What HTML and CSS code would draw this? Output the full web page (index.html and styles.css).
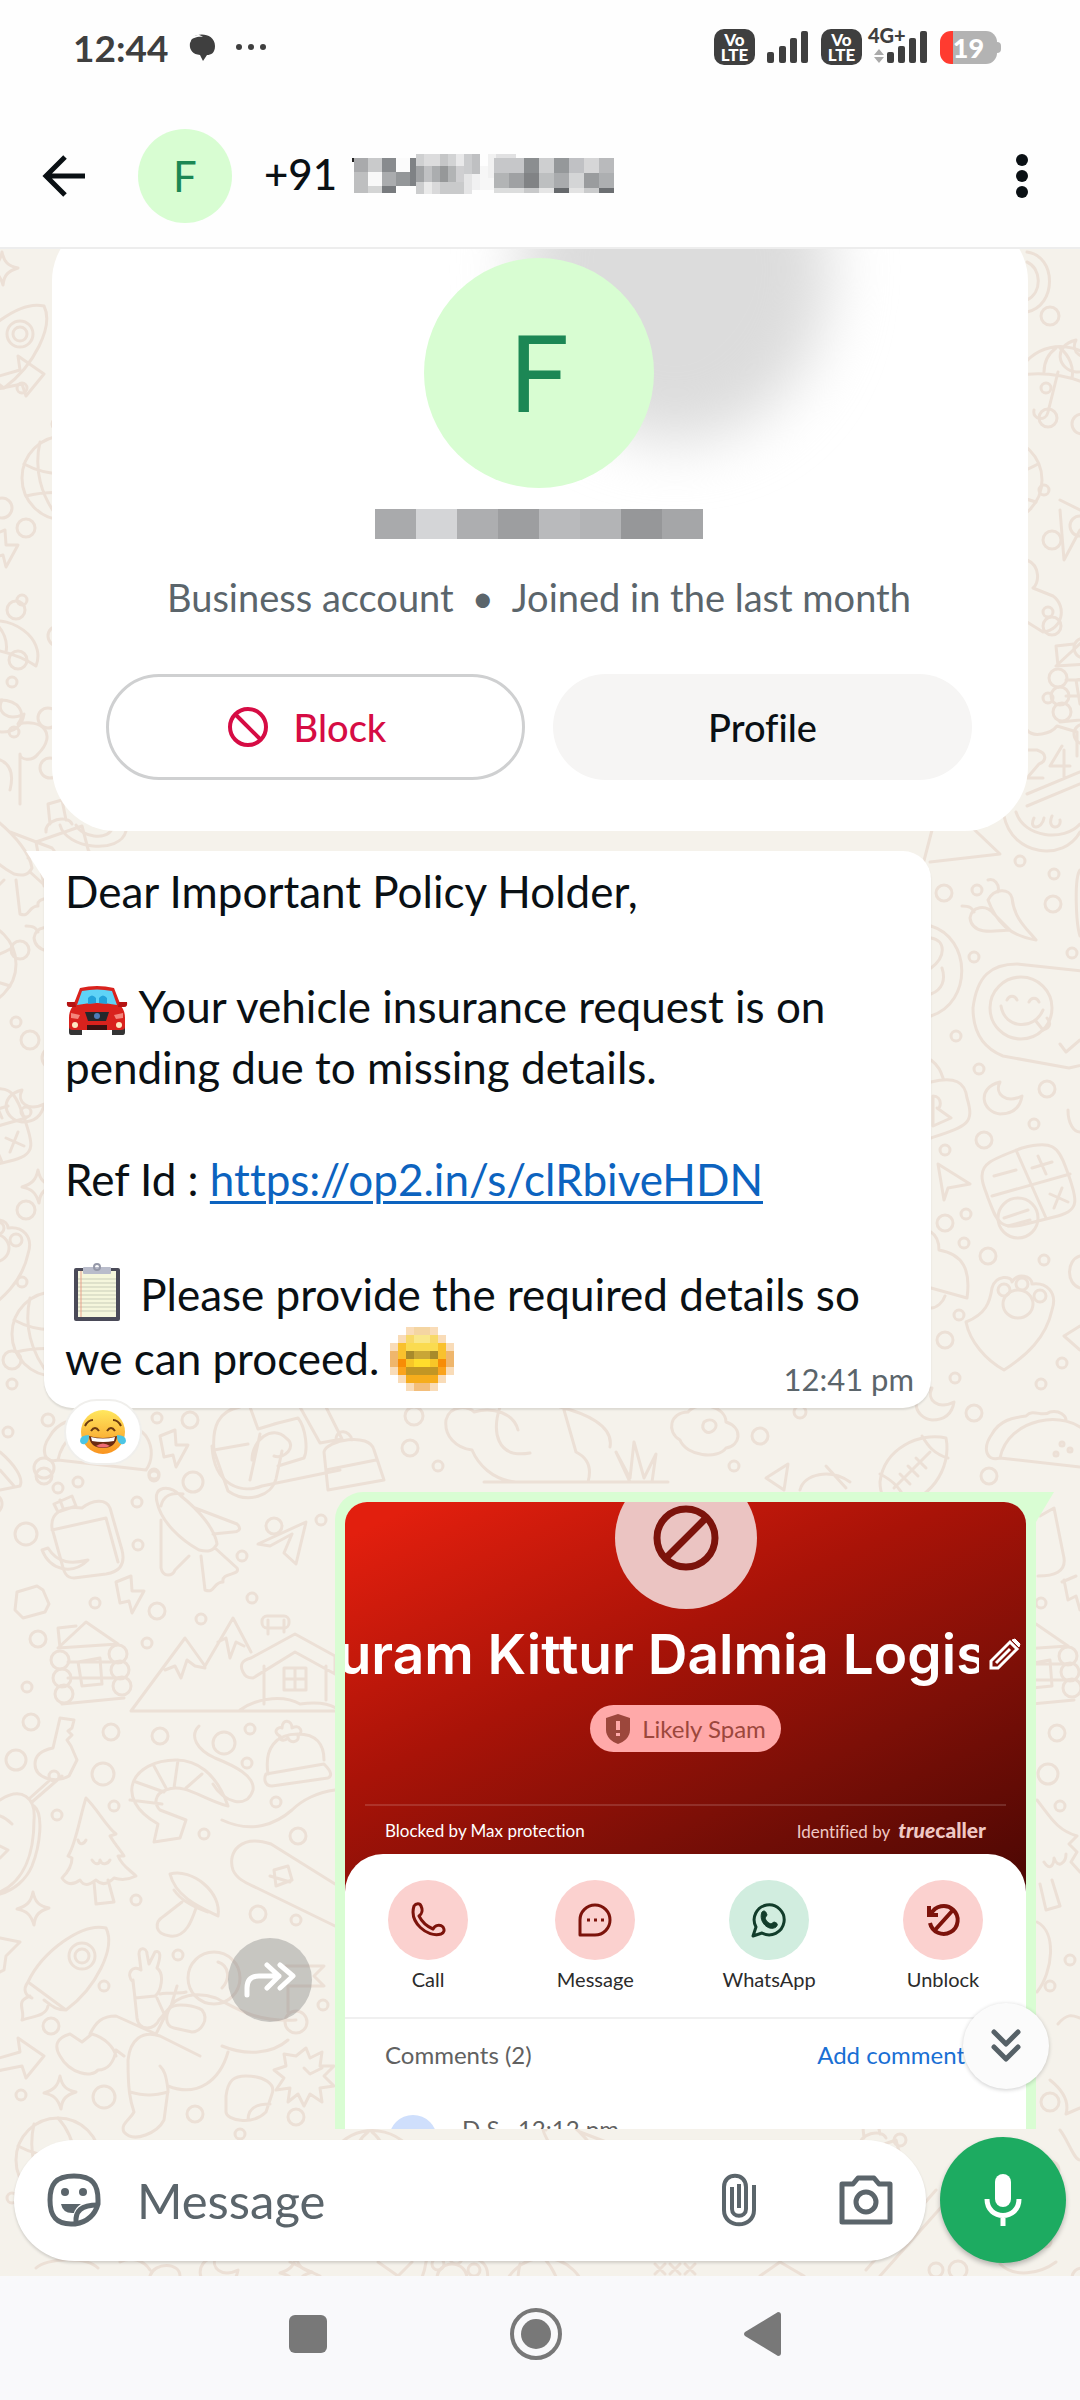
FILE: index.html
```html
<!DOCTYPE html>
<html lang="en">
<head>
    <meta charset="utf-8">
    <meta name="viewport" content="width=device-width, initial-scale=1">
    <title>Chat</title>
    <link rel="stylesheet" href="styles.css">
</head>
<body>
    <div class="status-bar">
        <div class="status-left">
            <span class="clock">12:44</span>
            <svg width="28" height="28" viewBox="0 0 28 28"><path d="M5 4C12-1 27 1 27 13c0 7-4 9-8 9l-4 6-3-6C4 21 1 16 2 10l1-2c0-3 8-5 12-4C10 0 7 3 5 4z" fill="#3f3f3f"/></svg>
            <svg width="30" height="8" viewBox="0 0 30 8" fill="#3f3f3f"><circle cx="3" cy="4" r="3"/><circle cx="15" cy="4" r="3"/><circle cx="27" cy="4" r="3"/></svg>
        </div>
        <div class="status-right">
            <span class="volte">Vo<br>LTE</span>
            <svg width="42" height="34" viewBox="0 0 42 34" fill="#3f3f3f"><rect x="0" y="22" width="7" height="11" rx="2"/><rect x="12" y="16" width="7" height="17" rx="2"/><rect x="23" y="8" width="7" height="25" rx="2"/><rect x="34" y="1" width="7" height="32" rx="2"/></svg>
            <span class="volte">Vo<br>LTE</span>
            <span class="network">
                <span class="network-type">4G+</span>
                <svg width="54" height="34" viewBox="0 0 54 34" fill="#3f3f3f"><path d="M0 25l5-6 5 6zM0 27h10l-5 6z" fill="#aaa"/><rect x="13" y="22" width="7" height="11" rx="2"/><rect x="24" y="16" width="7" height="17" rx="2"/><rect x="35" y="8" width="7" height="25" rx="2"/><rect x="46" y="1" width="7" height="32" rx="2"/></svg>
            </span>
            <span class="battery">19</span>
        </div>
    </div>

    <header class="chat-header">
        <button class="icon-button" aria-label="Back">
            <svg width="44" height="44" viewBox="0 0 44 44" fill="none" stroke="#0a1014" stroke-width="5"><path d="M43 22H5M23 3L4 22l19 19"/></svg>
        </button>
        <div class="avatar">F</div>
        <div class="contact">
            <span>+91</span>
            <svg width="266" height="44" viewBox="300 60 798 132" shape-rendering="crispEdges">
                <path d="M302 78h8v12h-8z" fill="#222"/>
                <path d="M309 78h42v42h-42z" fill="#a9aaac"/><path d="M351 78h42v42h-42z" fill="#c9cacb"/><path d="M393 78h42v42h-42z" fill="#888b8e"/><path d="M435 78h42v42h-42z" fill="#fbfbfb"/><path d="M477 78h20v84h-20z" fill="#7f8285"/>
                <path d="M309 120h42v42h-42z" fill="#bebfc0"/><path d="M351 120h42v42h-42z" fill="#f8f8f8"/><path d="M393 120h42v42h-42z" fill="#aaacae"/><path d="M435 120h42v42h-42z" fill="#949799"/>
                <path d="M309 162h42v21h-42z" fill="#bebfc0"/><path d="M351 162h42v21h-42z" fill="#d4d5d5"/><path d="M393 162h42v21h-42z" fill="#787b7e"/>
                <path d="M495 66h24v36h-24z" fill="#cfd0d1"/><path d="M519 66h48v36h-48z" fill="#dcdcdd"/><path d="M567 66h24v36h-24z" fill="#c5c6c7"/><path d="M591 66h24v36h-24z" fill="#d2d3d4"/><path d="M615 66h24v36h-24z" fill="#e9e9ea"/><path d="M639 66h24v60h-24z" fill="#cbccce"/><path d="M663 66h24v60h-24z" fill="#bfc0c2"/>
                <path d="M495 102h24v48h-24z" fill="#a1a3a5"/><path d="M519 102h24v48h-24z" fill="#c0c1c3"/><path d="M543 102h24v48h-24z" fill="#abadaf"/><path d="M567 102h24v48h-24z" fill="#969899"/><path d="M591 102h24v48h-24z" fill="#b2b4b5"/><path d="M615 102h24v48h-24z" fill="#cfcfd1"/>
                <path d="M495 150h24v36h-24z" fill="#cccdce"/><path d="M519 150h24v36h-24z" fill="#eaeaea"/><path d="M543 150h24v36h-24z" fill="#d9d9da"/><path d="M567 150h72v36h-72z" fill="#c9cacb"/><path d="M639 126h24v60h-24z" fill="#e5e5e6"/><path d="M663 126h24v48h-24z" fill="#f1f1f2"/><path d="M687 102h42v72h-42z" fill="#f7f7f7"/><path d="M711 66h24v72h-24z" fill="#f1f1f1"/>
                <path d="M735 66h60v12h-60z" fill="#e1e1e2"/><path d="M729 78h90v45h-90z" fill="#c6c7c9"/><path d="M819 78h45v45h-45z" fill="#8b8e90"/><path d="M864 78h45v45h-45z" fill="#cecfd0"/><path d="M909 78h45v45h-45z" fill="#95989a"/><path d="M954 78h45v45h-45z" fill="#c0c1c4"/><path d="M999 78h45v45h-45z" fill="#d6d6d7"/><path d="M1044 78h45v45h-45z" fill="#b9babc"/>
                <path d="M729 123h45v45h-45z" fill="#b2b4b5"/><path d="M774 123h45v45h-45z" fill="#9fa1a3"/><path d="M819 123h45v45h-45z" fill="#818385"/><path d="M864 123h45v45h-45z" fill="#bdbfc0"/><path d="M909 123h45v45h-45z" fill="#a9abad"/><path d="M954 123h45v45h-45z" fill="#d4d5d6"/><path d="M999 123h45v45h-45z" fill="#9a9c9e"/><path d="M1044 123h45v45h-45z" fill="#adafb1"/>
                <path d="M729 168h90v15h-90z" fill="#dcdddd"/><path d="M819 168h45v15h-45z" fill="#c8c9ca"/><path d="M864 168h45v15h-45z" fill="#e6e6e6"/><path d="M909 168h45v15h-45z" fill="#66696c"/><path d="M954 168h45v15h-45z" fill="#e3e3e3"/><path d="M999 168h45v15h-45z" fill="#cacbcc"/><path d="M1044 168h45v15h-45z" fill="#6c6f72"/>
            </svg>
        </div>
        <button class="icon-button" aria-label="More options">
            <svg width="12" height="44" viewBox="0 0 12 44" fill="#0a1014"><circle cx="6" cy="6" r="6"/><circle cx="6" cy="22" r="6"/><circle cx="6" cy="38" r="6"/></svg>
        </button>
    </header>

    <main class="chat">
        <svg class="wallpaper" viewBox="0 249 1080 2027" preserveAspectRatio="xMidYMin slice" aria-hidden="true">
            <defs>
                <g id="dots">
                    <circle cx="20" cy="20" r="9"/><circle cx="72" cy="8" r="5"/><circle cx="108" cy="44" r="6"/><circle cx="16" cy="92" r="5"/><circle cx="52" cy="128" r="10"/><circle cx="118" cy="112" r="5"/>
                </g>
                <g id="rocket">
                    <path d="M6 60C20 30 60 0 84 6c10 20-10 60-40 82zM6 60l38 28M6 60c-6 8-2 14 4 16M44 88c-10 0-14-4-22-10M8 74c-16 6-4 14-8 24 12-4 24-4 26-14"/><circle cx="60" cy="34" r="13"/><circle cx="60" cy="34" r="7"/>
                </g>
                <path id="star" d="M16 0c2 10 6 14 16 16-10 3-14 7-15 17-3-10-7-14-17-16 10-3 14-7 16-17z"/>
                <path id="bolt" d="M0 6l15-6 1 15 12 0-12 22-3-12-9 2z"/>
                <path id="moon" d="M16 0c-6 12 6 22 22 14-2 12-10 18-22 18C-2 30-8 6 16 0z"/>
                <path id="arrow" d="M0 26l28-8-2-14 26 18-18 22-4-12-30 6z"/>
                <path id="plane" d="M0 22L48 0 38 42 26 31 34 12 12 24z"/>
                <g id="taco">
                    <path d="M14 50C22 10 80 0 102 26c8 12 6 26 0 34L14 50zM14 50C0 54-4 40 6 26 14 12 26 10 40 8c8-8 16 2 24-4 10-2 16 4 16 8"/><circle cx="76" cy="36" r="2"/><circle cx="84" cy="42" r="2"/><circle cx="70" cy="46" r="2"/>
                </g>
                <g id="globe">
                    <circle cx="44" cy="44" r="42"/><path d="M4 30c26 14 54 12 78-2M20 8c-6 26 0 54 20 78M44 2c20 22 22 54 10 82M6 62c24-6 52-4 74 4"/>
                </g>
                <g id="ball">
                    <path d="M0 50C4 16 40 0 66 6c6 30-16 66-54 66C4 72 0 60 0 50zM14 56l36-36M20 42l10 10M28 34l10 10M36 26l10 10M0 42c12 6 22 16 26 28M42 4c6 10 12 18 26 22"/>
                </g>
                <g id="paw">
                    <path d="M26 12C30-2 46 0 46 6c6-10 20-6 20 2 14-2 26 8 20 26C80 62 60 80 38 94 20 84 4 66 0 46c20-8 24-20 26-34z"/><ellipse cx="52" cy="28" rx="15" ry="14"/><circle cx="38" cy="14" r="6"/><circle cx="56" cy="8" r="6"/><circle cx="74" cy="20" r="6"/>
                </g>
                <g id="smile">
                    <path d="M0 44C4 12 18 0 44 0l74 8M0 44c0 24 10 40 30 48l66 12 26-6"/><circle cx="48" cy="44" r="31"/><path d="M28 42c4 24 34 24 42 4M34 36c2-5 8-5 10 0M56 38c2-5 8-5 10 0M62 56l8 10c8-2 8-8 4-12"/>
                </g>
                <g id="bottle">
                    <path d="M0 30L46 14l12 46-50 14zM10 20c-2-12 22-18 26-8M14 12L12-8l14-4 4 20M6 52l48-12"/>
                </g>
                <g id="shrimp">
                    <path d="M30 66C-16 40 4 2 48 2c20 0 40 12 52 46C76 42 56 24 38 32c-12 4-12 14-6 20l26 10-6 18-26 4zM26 8l12 22M8 24l28 10M2 42l32 4M50 2L46 30M74 16L58 30"/>
                </g>
                <g id="tree">
                    <path d="M24 2c12 12 20 28 30 36l-6 2c6 10 12 16 14 20h-6c4 10 12 14 18 20-8 4-16 4-22 2-8 8-14 6-18 2-8 6-12 6-16 0-8 6-14 4-18-2 8-8 10-14 10-20l-4-2c8-12 12-40 18-58zM32 86l2 22 18-2-6-22M16 44c2 6 6 4 8 0M30 64c4 6 8 4 8 0 2 6 8 4 10 0"/>
                </g>
                <g id="cabin">
                    <path d="M8 26L36 0l32 22M8 26l60-4M10 26L8 6l18-2M12 82l62-6M18 40h52M18 56h52M28 40l22-4 2 26-20 2z"/><circle cx="10" cy="38" r="9"/><circle cx="12" cy="56" r="9"/><circle cx="14" cy="72" r="9"/><circle cx="68" cy="32" r="9"/><circle cx="70" cy="48" r="9"/><circle cx="72" cy="64" r="9"/>
                </g>
                <g id="mushroom">
                    <path d="M14 0C36-6 66 18 62 42 46 34 20 24 14 0zM18 16c8 12 22 18 34 22M40 34C36 46 30 64 14 62-2 60-2 48 8 42l18-14"/>
                </g>
                <g id="peppers">
                    <path d="M26 0c6-2 12 4 10 12M26 20c6-12 22-12 24-2 2 20 14 30 24 42-26-4-40-18-48-40zM0 26c8 0 10 2 12 6M8 38c2-12 16-14 24-4l16 16C28 52 10 54 8 38z"/>
                </g>
                <g id="calc">
                    <path d="M0 30C0 18 8 14 40 2c30-8 36-2 44 20 12 32 14 42-8 48L44 78C16 86 14 72 6 52 2 40 0 38 0 30zM34 4l30 68M10 50l78-22M12 30l22-6M50 22l20-6M56 10l8 18M68 48l18 8M80 42l-8 20"/><circle cx="36" cy="72" r="20"/><path d="M22 72l24-8M26 80l22-6"/>
                </g>
                <g id="backpack">
                    <path d="M2 34C0 18 14 12 32 14c10-8 24-10 28 0l12 42c4 16-4 22-16 24l-32 4c-8 0-10-6-12-14zM2 36l54-12 12 44M4 10L22 2l4 10-18 6zM10 6l3 8"/><path d="M-8 56c8 20 30 26 46 10-16 4-30 4-40-12z"/>
                </g>
                <g id="shuttle">
                    <path d="M2 16C-2 0 14-2 26 10c20 16 34 34 36 48-4 8-10 8-18 6C26 54 6 36 2 16zM6 20c2-10 10-14 22-12M40 22l42 16c6 6 0 8-4 8l-20 2M6 34v48c2 10 12 8 14 2l14-14M46 70l4 34c10 4 8-8 18-8-2-10 18-6 14-14L60 62"/>
                </g>
                <g id="umbrella">
                    <path d="M0 30C10 0 50-10 76 14c10 10 12 22 8 32C60 30 24 24 0 30zM40 26l-10 40c-2 10-16 8-14-2M38 2c-8 6-12 14-12 24M42 2c10 8 14 20 12 30"/>
                </g>
            </defs>
            <g class="doodles">
                <!-- left edge -->
                <use href="#star" x="-14" y="252"/><use href="#rocket" x="-40" y="300"/><use href="#dots" x="-50" y="380"/><use href="#arrow" x="-8" y="352"/><use href="#globe" x="20" y="434"/><use href="#dots" x="6" y="508"/><use href="#bolt" x="-10" y="530"/><use href="#moon" x="-14" y="700"/><use href="#dots" x="-4" y="590"/><use href="#umbrella" x="-48" y="620"/><use href="#dots" x="-2" y="640"/>
                <path d="M0 700c20 0 26 14 18 24 24-6 40 10 20 30-6 8-18 6-18 0v50M0 760c10 4 14 14 10 30"/>
                <use href="#shuttle" x="-30" y="810"/><use href="#bottle" x="36" y="812"/>
                <path d="M60 825c6 24 60 30 66 6M76 825c6 12 30 16 36 4"/>
                <use href="#peppers" x="26" y="900"/><use href="#dots" x="0" y="930"/><use href="#globe" x="-70" y="920"/><use href="#dots" x="10" y="1020"/><use href="#moon" x="6" y="1090"/><use href="#calc" x="-62" y="1090"/><use href="#star" x="22" y="1170"/><use href="#dots" x="6" y="1190"/><use href="#paw" x="-58" y="1220"/><use href="#globe" x="10" y="1290"/><use href="#dots" x="-8" y="1340"/>
                <!-- row between the messages -->
                <use href="#dots" x="-60" y="1376"/><use href="#taco" x="44" y="1410"/><use href="#bolt" x="160" y="1430"/>
                <path d="M240 1407c-22 4-28 20-26 44l14 40c20 14 44 4 48-12l6-28M214 1450l34-6M250 1480l10-46M250 1407l8 22 20-6M274 1424l24-6c8 10 10 32 6 40l-26 8M252 1460c0-20 20-36 34-22 12 8-2 22-12 18"/>
                <path d="M300 1407l20 36 22-4-16-32M324 1452c2-12 46-20 50-2l10 30-56 10zM336 1440c0-12 14-10 16 0M326 1470l50-10"/>
                <circle cx="190" cy="1420" r="8"/><circle cx="157" cy="1418" r="5"/><circle cx="193" cy="1482" r="10"/><circle cx="154" cy="1476" r="5"/><circle cx="410" cy="1448" r="8"/><circle cx="438" cy="1466" r="5"/><circle cx="414" cy="1416" r="9"/>
                <path d="M446 1420c4-16 24-14 28-8 20-6 40 2 44 18M446 1420c-2 16 10 28 26 30 6 14 20 30 44 32h72c4-14 0-24-12-30l-12-42M500 1407c-8 24-4 52 30 46M484 1482h184M630 1482l-14-30 14 26 4-36 10 36 12-24-4 28M560 1407c24 6 54 18 50 40"/>
                <path d="M680 1440c-14-8-10-28 8-28 10-12 38-6 38 10 18 6 14 24 0 26-8 12-40 8-46-8zM704 1422c8-6 16 2 10 8s-14 0-10-8"/>
                <circle cx="760" cy="1436" r="8"/><circle cx="734" cy="1466" r="5"/><circle cx="800" cy="1412" r="6"/><path d="M766 1478l22-14-4 26zM800 1490c4-16 30-22 50-8M826 1466l20 22"/>
                <use href="#ball" x="880" y="1432"/><use href="#moon" x="916" y="1388"/>
                <!-- left of the sent message -->
                <use href="#backpack" x="50" y="1494"/><use href="#shuttle" x="155" y="1486"/><use href="#plane" x="258" y="1522"/>
                <path d="M0 1452c14 12 24 26 20 34l-20 4M0 1470l14 16"/>
                <path d="M17 1592l20-6 6 4 6 14-4 8-22 6-8-8zM212 1446c2 40 30 48 50 40l78-16"/>
                <use href="#bolt" x="116" y="1576"/><use href="#cabin" x="50" y="1622"/>
                <path d="M131 1711h204M131 1711l54-73 20 28 28-48 18 34M165 1670l10-4 6 12 6-18 8 6 10 2M218 1642l8-4 4 20 6-16 8 4M243 1672c-4-8 0-12 8-14l44-24 40 22v18l-40-22-42 26c-6 0-8-2-10-6zM264 1666v38M326 1666v34M284 1668h22v22h-22zM295 1668v22M284 1679h22M240 1710c20-14 46-14 60-6 14-2 26-2 36 4M268 1634v-14M284 1632v-12"/><rect x="262" y="1616" width="27" height="12" rx="5"/>
                <path d="M60 1718l14 2-2 8-4 3 4 4-5 5 4 6 6 14-8 16c-14 8-34 2-34-12 0-10 8-14 18-16zM50 1780l-20 18M62 1776l-30 26"/><circle cx="54" cy="1776" r="5"/>
                <path d="M0 1800c22-14 36-2 34 20 0 30-8 60-34 72M34 1806c10 8 6 40-2 60-6 14-18 24-32 28M0 1816c6 2 10 6 12 8M0 1846l8 4-8 8"/>
                <use href="#tree" x="62" y="1796"/><use href="#shrimp" x="128" y="1758"/>
                <path d="M199 1726c-10 10-2 24 16 32 20 8 40 18 38 32-6 20-30 12-40-6M222 1820c30 14 54 4 70-10 10-10 26-18 43-20"/>
                <path d="M268 1774c-4-26 8-40 30-40 18 0 26 10 26 26M266 1774l58-10c8 8 8 12 4 14l-56 8c-8 0-8-8-6-12zM280 1736c-8-4-2-10 2-8 0-10 10-8 10 0 8-4 12 4 6 8 2 6-8 8-10 2-4 4-10 2-8-2z"/>
                <use href="#mushroom" x="156" y="1874"/>
                <path d="M335 1884l-64-40c-30-10-44 8-38 26 4 10 16 14 24 18l78 38M274 1870l14-4 4 14-16 6zM270 1876l20 6"/>
                <use href="#star" x="17" y="1892"/><use href="#star" x="44" y="2076"/><use href="#rocket" x="22" y="1922"/><use href="#arrow" x="-8" y="2034"/>
                <path d="M0 1938l20 4-14 14-2 14-4 2M133 1982c-8-8 0-18 8-12l-2-16c0-8 8-6 8 0l2 10 6-12c6-2 6 4 2 16 8 6 4 24-2 28l-20 2zM133 1980l4 38c2 14 18 12 22 2l12-14 6-20M157 1998l8 18M160 1994c10-2 20 0 26-2M90 2034c6-12 12-18 26-18l40 18 12-24c8-16 30-18 48-12 20 10 38 24 80 22M92 2034l-10 8-12-8c-14 4-16 12-10 22 10 18 32 22 38 14 10 0 16-8 18-20l8 6M92 2034c14 4 22 14 24 22M128 2060c2-20 14-30 32-24l40 20M128 2060c0 30 2 40 6 52-4 8-14 12-10 20 10 12 34 0 40-12l4-30c-2-16-4-20-8-24M130 2092c14 4 24 4 38 0M168 2086c30 12 52-6 60-34M222 2046c24 10 50 8 66-6"/><path d="M170 2008c6-6 26-2 32 2 8 10-2 22-10 22l-18-4c-10-2-8-14-4-20z"/><circle cx="214" cy="1978" r="26"/><path d="M218 1962c12 4 12 18 4 26M286 1966h38l-10 10 10 10h-36v26"/><circle cx="296" cy="2022" r="11"/>
                <path d="M306 2048l4 10 12-6-2 14h14l-10 10 10 10-14 2 2 14-12-8-6 12-6-12-10 8 2-14-14 2 8-12-10-8 12-4-2-12 12 2zM304 2068l6 6 12-6"/>
                <path d="M226 2096c2-16 8-20 20-20 18 0 30 8 26 18l-6 18c-14 14-40 8-40 0zM248 2120c0-12 8-16 22-16"/>
                <circle cx="44" cy="1476" r="8"/><circle cx="78" cy="1482" r="5"/><circle cx="154" cy="1474" r="5"/><circle cx="26" cy="1534" r="11"/><circle cx="137" cy="1502" r="5"/><circle cx="138" cy="1545" r="5"/><circle cx="274" cy="1526" r="8"/><circle cx="242" cy="1556" r="5"/><circle cx="321" cy="1520" r="5"/><circle cx="252" cy="1598" r="5"/><circle cx="157" cy="1611" r="8"/><circle cx="201" cy="1619" r="5"/><circle cx="38" cy="1639" r="8"/><circle cx="95" cy="1603" r="5"/><circle cx="147" cy="1643" r="5"/><circle cx="27" cy="1687" r="5"/><circle cx="31" cy="1722" r="8"/><circle cx="111" cy="1732" r="8"/><circle cx="16" cy="1760" r="10"/><circle cx="103" cy="1774" r="11"/><circle cx="160" cy="1736" r="8"/><circle cx="224" cy="1743" r="11"/><circle cx="250" cy="1729" r="5"/><circle cx="247" cy="1763" r="5"/><circle cx="57" cy="1815" r="5"/><circle cx="114" cy="1806" r="5"/><circle cx="276" cy="1802" r="5"/><circle cx="204" cy="1834" r="5"/><circle cx="298" cy="1836" r="8"/><circle cx="136" cy="1900" r="5"/><circle cx="258" cy="1914" r="8"/><circle cx="296" cy="1920" r="5"/><circle cx="178" cy="1955" r="5"/><circle cx="104" cy="1986" r="5"/><circle cx="51" cy="2026" r="8"/><circle cx="104" cy="2097" r="11"/><circle cx="21" cy="2095" r="5"/><circle cx="195" cy="2114" r="8"/><circle cx="296" cy="2117" r="8"/><circle cx="323" cy="2005" r="5"/>
                <!-- bottom strip -->
                <use href="#globe" x="14" y="2116"/><use href="#dots" x="-60" y="2190"/><use href="#umbrella" x="330" y="2130"/><use href="#shuttle" x="540" y="2110"/><use href="#bottle" x="850" y="2126"/><use href="#paw" x="400" y="2250"/><use href="#moon" x="200" y="2256"/><use href="#star" x="280" y="2256"/><use href="#globe" x="500" y="2256"/>
                <path d="M36 2268c10-10 50-12 62 0M120 2262c10-6 24-2 30 8M150 2276c4-14 30-14 30 0M290 2262l30 14M378 2262l20 14 14-14M655 2264l10 10m0-10l-10 10m15-10l10 10m0-10l-10 10m15-10l10 10m0-10l-10 10M760 2276l20-14 24 14M866 2270l70-80M880 2276l80-90"/>
                <circle cx="240" cy="2134" r="5"/><circle cx="900" cy="2140" r="6"/><circle cx="936" cy="2270" r="7"/><circle cx="958" cy="2270" r="9"/><path d="M1000 2264c14 14 40 10 56-2M1060 2130c8 10 14 30 20 30"/><use href="#dots" x="1030" y="2150"/>
                <!-- right edge, upper half -->
                <path d="M1027 262c14 6 16 30 0 38M1027 252c30 4 30 54 0 60"/><use href="#dots" x="1030" y="296"/><use href="#umbrella" x="1018" y="346"/><use href="#dots" x="1028" y="398"/><use href="#globe" x="956" y="436"/><use href="#moon" x="1060" y="340"/>
                <path d="M1060 510l4 50 16-30M1060 500l20 10M1027 560c14 6 12 24 6 28l20 8c14 10 10 34-10 36l-16-10"/><use href="#dots" x="1032" y="520"/><use href="#cabin" x="1048" y="640"/>
                <path d="M1027 750h10c12 4 8 12 2 14l-12 14h16M1062 746l-12 20h20M1064 750v28M1027 730c6 8 24 4 30-4l20 6v24M1027 794l53-22M1027 806l53-22"/><use href="#dots" x="1032" y="606"/>
                <path d="M1004 816c8 40 60 46 76 16M1016 812c8 26 48 30 64 12M1034 818c-6 12 8 12 10 0M1052 816c-6 14 10 14 8 4"/>
                <!-- right of the received message -->
                <path d="M930 862l70-8-40-38M920 876l12-46"/>
                <use href="#peppers" x="962" y="880"/><circle cx="944" cy="893" r="8"/><circle cx="977" cy="890" r="5"/><circle cx="1020" cy="861" r="5"/><circle cx="1054" cy="874" r="5"/><circle cx="1053" cy="904" r="8"/><circle cx="974" cy="957" r="5"/><circle cx="1072" cy="953" r="5"/>
                <path d="M1080 870c-6 8-4 54 0 66M931 926c40 12 42 76 0 90M931 938c14 2 16 18 0 30M942 968c4 12 0 22-11 26"/>
                <use href="#smile" x="973" y="964"/><path d="M1060 1044l6 8 14-12"/><circle cx="956" cy="1036" r="5"/><circle cx="979" cy="1069" r="5"/><use href="#moon" x="984" y="1082"/><circle cx="1047" cy="1089" r="8"/><circle cx="1034" cy="1124" r="5"/><circle cx="984" cy="1140" r="8"/><circle cx="945" cy="1150" r="5"/>
                <path d="M931 1060c8 6 10 12 12 18M931 1082c24-6 34 0 36 16 8 26 0 28-36 40M933 1096c10 0 8 14 4 12l14 10-18 8zM938 1164l32 20-22 4-4 12zM1068 1110c0 14 6 22 12 22"/>
                <use href="#calc" x="982" y="1146"/><circle cx="966" cy="1214" r="5"/><circle cx="945" cy="1223" r="8"/><circle cx="964" cy="1243" r="5"/><circle cx="988" cy="1256" r="8"/><circle cx="1044" cy="1260" r="5"/>
                <path d="M931 1232c6 4 8 10 8 18 24 4 32 20 28 48l-36-10M931 1308c6 0 12-6 14-12M1080 1256c-14 4-14 28 0 32M1080 1326l-16 10 16 14"/>
                <use href="#paw" x="966" y="1276"/><circle cx="959" cy="1315" r="5"/><circle cx="945" cy="1340" r="8"/><circle cx="955" cy="1378" r="5"/><circle cx="1041" cy="1384" r="5"/><circle cx="1062" cy="1363" r="5"/><circle cx="974" cy="1413" r="8"/><use href="#taco" x="986" y="1408"/><circle cx="989" cy="1476" r="8"/>
                <!-- right of the sent message -->
                <path d="M1040 1516l14-8 10 50c2 14-10 18-26 18M1062 1582l14-6M1064 1580l4 20 8-4 4 14"/><circle cx="1041" cy="1603" r="5"/><use href="#cabin" x="1000" y="1624"/><circle cx="1057" cy="1733" r="8"/><circle cx="1048" cy="1774" r="10"/><circle cx="1060" cy="1806" r="5"/>
                <path d="M1037 1800c14 18 20 30 40 36l-8 8 8 8-6 10 9 10M1044 1862c6 10 10 2 10-4 4 12 12 4 12-4M1040 1884l6 26 14-4-8-26M1037 1922c20 10 16 50 0 70M1058 2024c10-12 16-8 22-6M1050 2080c10 8 20 20 16 34l14-6"/><circle cx="1050" cy="1986" r="5"/><circle cx="1050" cy="2102" r="9"/><circle cx="1070" cy="1960" r="5"/>
            </g>
        </svg>

        <div class="messages">
            <section class="contact-card">
                <div class="avatar avatar-large">F</div>
                <svg class="hidden-name" width="328" height="30" viewBox="0 0 328 30" shape-rendering="crispEdges"><path d="M0 0h41v30H0z" fill="#a9aaac"/><path d="M41 0h41v30H41z" fill="#d4d5d7"/><path d="M82 0h41v30H82z" fill="#adaeb0"/><path d="M123 0h41v30h-41z" fill="#9d9ea0"/><path d="M164 0h41v30h-41z" fill="#b9babc"/><path d="M205 0h41v30h-41z" fill="#b3b4b6"/><path d="M246 0h41v30h-41z" fill="#969799"/><path d="M287 0h41v30h-41z" fill="#a5a6a8"/></svg>
                <p class="account-info"><span>Business account</span><span>•</span><span>Joined in the last month</span></p>
                <div class="card-actions">
                    <button class="block-button">
                        <svg width="42" height="42" viewBox="0 0 42 42" fill="none" stroke="#d60c44" stroke-width="4"><circle cx="21" cy="21" r="18"/><path d="M8 8l26 26"/></svg>
                        Block
                    </button>
                    <button class="profile-button">Profile</button>
                </div>
            </section>

            <article class="bubble received">
                <p>Dear Important Policy Holder,</p>
                <p><svg class="emoji" width="64" height="64" viewBox="0 0 64 64" role="img" aria-label="Car">
                    <path d="M4 48h13v12H6q-2 0-2-3zM60 48H47v12h11q2 0 2-3z" fill="#343434"/>
                    <path d="M15 13q17-4 34 0l7 18q4 5 4 12v9q0 3-4 3H8q-4 0-4-3v-9q0-7 4-12z" fill="#d9221d"/>
                    <path d="M17 16q15-3 30 0l5 14q-20-4-40 0z" fill="#5fd3f7"/><path d="M23 29v-6q4-5 8 0v5M34 28v-5q4-5 8 0v6" fill="#23a3db"/>
                    <path d="M2 27h8l1 5H5q-4 0-3-5zM62 27h-8l-1 5h6q4 0 3-5z" fill="#b51313"/>
                    <path d="M20 37h24l-3 9H23z" fill="#25282c"/><circle cx="32" cy="41" r="3" fill="#4e7cb8"/>
                    <path d="M22 50h20v5H22z" fill="#3a1212"/><circle cx="10" cy="50" r="3" fill="#ffe9c2"/><circle cx="54" cy="50" r="3" fill="#ffe9c2"/><path d="M6 38l9 2-2 4-7-1zM58 38l-9 2 2 4 7-1z" fill="#f4857b"/>
                </svg> Your vehicle insurance request is on pending due to missing details.</p>
                <p>Ref Id : <a href="https://op2.in/s/clRbiveHDN">https://op2.in/s/clRbiveHDN</a></p>
                <p><svg class="emoji" width="64" height="64" viewBox="0 0 64 64" role="img" aria-label="Clipboard">
                    <rect x="9" y="5" width="46" height="53" rx="2" fill="#4a4a58"/><path d="M13 8h38v46H13z" fill="#f5f6dc"/>
                    <path d="M13 16h38M13 20h38M13 24h38M13 28h38M13 32h38M13 36h38M13 40h38M13 44h38M13 48h38" stroke="#c9cdb8"/><path d="M16 8v46" stroke="#eaa08a"/>
                    <rect x="18" y="4" width="28" height="7" rx="1" fill="#b9bccb"/><circle cx="32" cy="4" r="3" fill="none" stroke="#9598a8" stroke-width="2"/>
                </svg> Please provide the required details so we can proceed.<svg class="emoji emoji-end" width="64" height="64" viewBox="0 0 8 8" shape-rendering="crispEdges" role="img" aria-label="Smile">
                    <path d="M2 0h4v1H2zM1 1h6v1H1zM0 2h8v4H0zM1 6h6v1H1zM2 7h4v1H2z" fill="#f9dcb8"/>
                    <path d="M3 0h2v1H3z" fill="#f4d5a2"/><path d="M2 1h4v1H2z" fill="#f8d968"/><path d="M3 1h2v1H3z" fill="#f9e78a"/>
                    <path d="M1 2h6v4H1z" fill="#f9c12d"/><path d="M2 2h4v1H2z" fill="#fadb50"/>
                    <path d="M2 3h4v1H2z" fill="#a88a2b"/><path d="M3 3h2v1H3z" fill="#c9a636"/><path d="M2 4h4v1H2z" fill="#f8c628"/><path d="M3 4h2v1H3z" fill="#ffdc2c"/>
                    <path d="M1 4h1v1H1zM6 4h1v1H6z" fill="#f78c06"/><path d="M0 3h1v2H0zM7 3h1v2H7z" fill="#efb66c"/><path d="M2 5h4v1H2z" fill="#c29624"/><path d="M1 5h1v1H1zM6 5h1v1H6z" fill="#faa31c"/>
                    <path d="M2 6h4v1H2z" fill="#f6ad1c"/><path d="M3 7h2v1H3z" fill="#f3be7b"/>
                </svg></p>
                <time class="sent-at">12:41 pm</time>
                <span class="reaction">
                    <svg width="46" height="46" viewBox="0 0 46 46" role="img" aria-label="Laughing">
                        <defs><linearGradient id="face" x1="0" y1="0" x2="0" y2="1"><stop offset="0" stop-color="#ffe75e"/><stop offset="1" stop-color="#f99420"/></linearGradient></defs>
                        <circle cx="23" cy="23" r="22" fill="url(#face)"/>
                        <path d="M9 27q14 4 28 0-1 12-14 12T9 27z" fill="#6b2b12"/><path d="M11 28q12 3 24 0l-1 4q-11 2-22 0z" fill="#fff"/><path d="M16 37q7-5 14 0-7 3-14 0z" fill="#ee6b74"/>
                        <path d="M11 22q4-6 8 0M27 22q4-6 8 0M5 17q3-6 8-6M41 17q-3-6-8-6" fill="none" stroke="#6b3a10" stroke-width="2"/>
                        <path d="M0 32q0-6 9-6 0 8-4 9t-5-3zM46 32q0-6-9-6 0 8 4 9t5-3z" fill="#4cc5e4"/>
                    </svg>
                </span>
            </article>

            <div class="sent-row">
                <button class="forward-button" aria-label="Forward">
                    <svg width="54" height="38" viewBox="0 0 54 38" fill="none" stroke="#fff" stroke-width="5" stroke-linecap="round" stroke-linejoin="round"><path d="M4 34V27q0-12 12-12h20M24 4l12 11-12 12M37 4l13 11-13 12"/></svg>
                </button>
                <article class="bubble sent">
                    <div class="photo">
                        <div class="caller">
                            <div class="caller-avatar">
                                <svg width="68" height="68" viewBox="0 0 68 68" fill="none" stroke="#7c130b" stroke-width="7"><circle cx="34" cy="34" r="29"/><path d="M54 14L14 54"/></svg>
                            </div>
                            <div class="caller-name">
                                <div class="name-text"><span>uram Kittur Dalmia Logis</span></div>
                                <svg width="32" height="32" viewBox="0 0 32 32" fill="none" stroke="#fff" stroke-width="3"><path d="M2 30v-7L21 4l7 7L9 30zM7 25L21 11"/><path d="M23 2l3-1 5 5-1 3z" fill="#fff" stroke-width="1"/></svg>
                            </div>
                            <span class="spam-tag">
                                <svg width="26" height="30" viewBox="0 0 26 30"><path d="M13 0l12 4v12c0 7-6 12-12 14C7 28 1 23 1 16V4z" fill="#9c473c"/><path d="M13 7v9M13 19v3" stroke="#ffa9a9" stroke-width="4"/></svg>
                                Likely Spam
                            </span>
                            <div class="caller-footer">
                                <span>Blocked by Max protection</span>
                                <span class="identified">Identified by <b><i>true</i>caller</b></span>
                            </div>
                        </div>
                        <div class="sheet">
                            <div class="actions">
                                <button class="action"><span class="action-icon"><svg width="36" height="36" viewBox="0 0 36 36" fill="none" stroke="#7c130b" stroke-width="3" stroke-linejoin="round"><path d="M4 4c2-3 6-3 7 0 2 4 1 8-2 10 3 6 7 10 14 13 2-4 7-5 10-2 2 3 1 6-2 7C17 36-1 20 4 4z"/></svg></span>Call</button>
                                <button class="action"><span class="action-icon"><svg width="36" height="36" viewBox="0 0 36 36" fill="none" stroke="#7c130b" stroke-width="3" stroke-linejoin="round"><path d="M3 33V18a15 15 0 1 1 15 15z"/><path d="M10 18h3M17 18h3M24 18h3"/></svg></span>Message</button>
                                <button class="action"><span class="action-icon whatsapp"><svg width="36" height="36" viewBox="0 0 36 36" fill="none" stroke="#123d2b" stroke-width="3" stroke-linejoin="round"><path d="M2 34l3-9a15 15 0 1 1 6 6z"/><path d="M11 10c2-2 4-1 5 3l-2 3c1 3 3 5 6 6l3-2c4 1 4 3 2 5-7 5-18-5-14-15z" fill="#123d2b" stroke-width="1"/></svg></span>WhatsApp</button>
                                <button class="action"><span class="action-icon"><svg width="36" height="36" viewBox="0 0 36 36" fill="none" stroke="#7c130b" stroke-width="4"><path d="M4 4v9h9M6 12a14 14 0 1 1-1 9M28 8L10 28"/></svg></span>Unblock</button>
                            </div>
                            <div class="comments-head"><span>Comments (2)</span><a href="#comment">Add comment</a></div>
                            <div class="comment" id="comment"><span class="comment-avatar"></span><span>D S · 12:12 pm</span></div>
                        </div>
                    </div>
                </article>
            </div>

            <button class="scroll-down" aria-label="Scroll to latest">
                <svg width="30" height="34" viewBox="0 0 30 34" fill="none" stroke="#566167" stroke-width="5" stroke-linecap="round" stroke-linejoin="round"><path d="M3 3l12 12L27 3M3 18l12 12 12-12"/></svg>
            </button>
        </div>

        <form class="composer">
            <div class="message-box">
                <button type="button" class="icon-button" aria-label="Stickers">
                    <svg width="54" height="54" viewBox="0 0 54 54" fill="none" stroke="#5b656b" stroke-width="5"><path d="M28 51H24C8 51 3 42 3 27S8 3 27 3s24 9 24 24v4C48 42 40 49 28 51z"/><path d="M29 50c-1-12 5-18 22-18"/><g fill="#5b656b" stroke="none"><circle cx="18" cy="19" r="4"/><circle cx="36" cy="19" r="4"/><path d="M14 31h20q-6 4-7 9-11 1-13-9z"/></g></svg>
                </button>
                <input type="text" placeholder="Message" aria-label="Message">
                <button type="button" class="icon-button" aria-label="Attach">
                    <svg width="36" height="54" viewBox="0 0 36 54" fill="none" stroke="#5b656b" stroke-width="4"><path d="M33 12v25c0 19-30 19-30 0V14C3-1 25-1 25 14v22c0 9-14 9-14 0V14h0"/><path d="M18 11v24"/></svg>
                </button>
                <button type="button" class="icon-button" aria-label="Camera">
                    <svg width="54" height="50" viewBox="0 0 54 50" fill="none" stroke="#5b656b" stroke-width="5" stroke-linejoin="round"><path d="M3 9h11l5-6h16l5 6h11v38H3z"/><circle cx="27" cy="27" r="10"/></svg>
                </button>
            </div>
            <button type="button" class="mic-button" aria-label="Record voice message">
                <svg width="38" height="52" viewBox="0 0 38 52"><rect x="11" y="0" width="16" height="33" rx="8" fill="#fff"/><path d="M3 25c0 22 32 22 32 0M19 41v11" fill="none" stroke="#fff" stroke-width="5"/></svg>
            </button>
        </form>
    </main>

    <nav class="system-nav">
        <button class="icon-button" aria-label="Recent apps"><svg width="54" height="54" viewBox="0 0 54 54"><rect x="8" y="8" width="38" height="38" rx="6" fill="#787878"/></svg></button>
        <button class="icon-button" aria-label="Home"><svg width="54" height="54" viewBox="0 0 54 54" fill="#787878"><circle cx="27" cy="27" r="24" fill="none" stroke="#787878" stroke-width="4"/><circle cx="27" cy="27" r="15"/></svg></button>
        <button class="icon-button" aria-label="Back"><svg width="54" height="54" viewBox="0 0 54 54"><path d="M8 25L41 5q3 0 3 3v38q0 3-3 3L8 29q-2-2 0-4z" fill="#787878"/></svg></button>
    </nav>
</body>
</html>
```
FILE: styles.css
```css
* {
    box-sizing: border-box;
}

body {
    margin: 0;
    height: 100vh;
    display: flex;
    flex-direction: column;
    font-family: Lato, "Noto Sans", sans-serif;
    font-variant-ligatures: none;
    color: #0a1014;
    background: #fefefe;
}

p {
    margin: 0;
}

svg {
    display: block;
    flex: none;
}

button {
    font: inherit;
    color: inherit;
    border: none;
    background: none;
    padding: 0;
    cursor: pointer;
}

.icon-button {
    display: flex;
    align-items: center;
    justify-content: center;
}

/* Status bar */
.status-bar {
    display: flex;
    justify-content: space-between;
    align-items: center;
    height: 94px;
    padding: 0 79px 0 73px;
    color: #3f3f3f;
}

.status-left {
    display: flex;
    align-items: center;
    gap: 20px;
}

.clock {
    font-size: 37px;
    font-weight: 700;
}

.status-right {
    display: flex;
    align-items: center;
    gap: 12px;
}

.volte {
    width: 41px;
    height: 36px;
    padding-top: 3px;
    border-radius: 10px;
    background: #3f3f3f;
    color: white;
    font-size: 17px;
    font-weight: 900;
    line-height: 15px;
    text-align: center;
}

.network {
    position: relative;
}

.network-type {
    position: absolute;
    left: -6px;
    top: -5px;
    font-size: 20px;
    line-height: 20px;
    font-weight: 900;
}

.battery {
    position: relative;
    width: 57px;
    height: 33px;
    border-radius: 11px;
    background: linear-gradient(to right, #ff3b30 13px, #b3b3b3 13px);
    color: white;
    font-size: 27px;
    font-weight: 900;
    line-height: 33px;
    text-align: center;
    margin-right: 4px;
}

.battery::after {
    content: "";
    position: absolute;
    right: -4px;
    top: 11px;
    width: 4px;
    height: 11px;
    border-radius: 0 4px 4px 0;
    background: #b3b3b3;
}

/* Chat header */
.chat-header {
    display: flex;
    align-items: center;
    height: 155px;
    padding: 10px 52px 0 42px;
    border-bottom: 2px solid #ededed;
}

.avatar {
    display: flex;
    align-items: center;
    justify-content: center;
    width: 94px;
    height: 94px;
    margin-left: 52px;
    border-radius: 50%;
    background: #d8fdd2;
    color: #1c8755;
    font-size: 42px;
}

.contact {
    flex: 1;
    display: flex;
    align-items: center;
    gap: 14px;
    margin-left: 32px;
    padding-bottom: 4px;
    font-size: 42px;
    line-height: 56px;
    font-weight: 500;
}

/* Chat area */
.chat {
    position: relative;
    flex: 1;
    min-height: 0;
    display: flex;
    flex-direction: column;
    overflow: hidden;
    background: #f5f2eb;
}

.wallpaper {
    position: absolute;
    inset: 0;
    width: 100%;
    height: 100%;
}

.doodles {
    fill: none;
    stroke: #ece0d6;
    stroke-width: 3px;
    stroke-linecap: round;
    stroke-linejoin: round;
}

.messages {
    position: relative;
    flex: 1;
    min-height: 0;
    overflow: hidden;
    padding: 0 44px;
}

.contact-card {
    position: relative;
    display: flex;
    flex-direction: column;
    align-items: center;
    margin: -32px 8px 20px;
    padding: 41px 56px 51px 54px;
    border-radius: 64px;
    background: white;
    overflow: hidden;
}

.contact-card::before {
    content: "";
    position: absolute;
    left: 48%;
    top: -120px;
    width: 310px;
    height: 345px;
    border-radius: 50%;
    background: #dcdcdc;
    filter: blur(30px);
}

.avatar-large {
    position: relative;
    width: 230px;
    height: 230px;
    margin: 0;
    font-size: 107px;
    line-height: 120px;
    padding-bottom: 4px;
}

.hidden-name {
    margin-top: 21px;
}

.account-info {
    display: flex;
    gap: 18px;
    margin-top: 35px;
    font-size: 38px;
    line-height: 46px;
    color: #5b656b;
}

.card-actions {
    display: grid;
    grid-template-columns: 1fr 1fr;
    gap: 28px;
    width: 100%;
    margin-top: 54px;
    font-size: 38px;
    font-weight: 500;
}

.block-button,
.profile-button {
    display: flex;
    align-items: center;
    justify-content: center;
    gap: 25px;
    height: 106px;
    border-radius: 53px;
}

.block-button {
    padding-right: 18px;
    border: 3px solid #cfd0d1;
    color: #d60c44;
}

.profile-button {
    background: #f6f5f4;
}

/* Messages */
.bubble {
    position: relative;
    border-radius: 28px;
}

.received {
    max-width: 887px;
    padding: 12px 20px 17px 21px;
    background: white;
    box-shadow: 0 2px 2px rgba(0, 0, 0, 0.1);
    font-size: 44px;
    line-height: 56px;
}

.received::before {
    content: "";
    position: absolute;
    left: -18px;
    top: 0;
    width: 46px;
    height: 28px;
    background: white;
    clip-path: polygon(0 0, 100% 0, 100% 100%, 18px 100%);
}

.received p {
    position: relative;
}

.received p + p {
    margin-top: 56px;
}

.received a {
    color: #0c63bf;
    text-decoration-thickness: 3px;
    text-underline-offset: 5px;
}

.emoji {
    display: inline-block;
    vertical-align: -16px;
}

.emoji-end {
    margin-left: 11px;
}

.sent-at {
    position: absolute;
    right: 17px;
    bottom: 10px;
    font-size: 31px;
    line-height: 38px;
    color: #5b656b;
}

.reaction {
    position: absolute;
    left: 20px;
    bottom: -57px;
    display: flex;
    align-items: center;
    justify-content: center;
    width: 78px;
    height: 66px;
    border: 2px solid #f0efec;
    border-radius: 33px;
    background: white;
}

.sent-row {
    display: flex;
    align-items: center;
    justify-content: flex-end;
    gap: 23px;
    margin-top: 84px;
}

.forward-button {
    display: flex;
    align-items: center;
    justify-content: center;
    width: 84px;
    height: 84px;
    border-radius: 50%;
    background: rgba(120, 120, 120, 0.36);
}

.sent {
    width: 701px;
    padding: 10px;
    background: #d9fdd3;
}

.sent::before {
    content: "";
    position: absolute;
    right: -18px;
    top: 0;
    width: 46px;
    height: 30px;
    background: #d9fdd3;
    clip-path: polygon(0 0, 100% 0, 28px 100%, 0 100%);
}

.photo {
    position: relative;
    height: 956px;
    border-radius: 22px;
    background: white;
    overflow: hidden;
}

.caller {
    display: flex;
    flex-direction: column;
    align-items: center;
    padding-bottom: 50px;
    background: linear-gradient(155deg, #e21f0e 5%, #a91308 40%, #7c0f07 68%, #4a0703 100%);
    color: white;
}

.caller-avatar {
    display: flex;
    align-items: center;
    justify-content: center;
    width: 142px;
    height: 142px;
    margin-top: -35px;
    border-radius: 50%;
    background: #ebc4c2;
}

.caller-name {
    display: flex;
    align-items: center;
    gap: 10px;
    width: 100%;
    margin-top: 8px;
    padding-right: 5px;
}

.name-text {
    flex: 1;
    min-width: 0;
    display: flex;
    justify-content: center;
    overflow: hidden;
    white-space: nowrap;
    font-family: Inter, "Noto Sans", sans-serif;
    font-size: 55px;
    line-height: 74px;
    font-weight: 600;
}

.spam-tag {
    display: flex;
    align-items: center;
    gap: 11px;
    height: 47px;
    margin-top: 14px;
    padding: 0 15px;
    border-radius: 24px;
    background: #ffa9a9;
    color: #9c473c;
    font-size: 24px;
}

.caller-footer {
    display: flex;
    justify-content: space-between;
    align-items: center;
    align-self: stretch;
    margin: 52px 20px 0;
    padding: 12px 20px 0;
    border-top: 2px solid rgba(255, 255, 255, 0.14);
    font-size: 17px;
    line-height: 24px;
}

.identified {
    color: #f0c8c4;
}

.identified b {
    margin-left: 4px;
    font-size: 21px;
    font-weight: 900;
}

.sheet {
    position: relative;
    margin-top: -40px;
    border-radius: 38px 38px 0 0;
    background: white;
}

.actions {
    display: flex;
    justify-content: space-between;
    padding: 26px 43px 24px;
    border-bottom: 2px solid #f0f0f0;
    color: #2b2b2b;
    font-size: 20px;
    line-height: 28px;
}

.action {
    display: flex;
    flex-direction: column;
    align-items: center;
    gap: 5px;
    min-width: 80px;
}

.action-icon {
    display: flex;
    align-items: center;
    justify-content: center;
    width: 80px;
    height: 80px;
    border-radius: 50%;
    background: #fbd1cf;
}

.whatsapp {
    background: #d1eddf;
}

.comments-head {
    display: flex;
    justify-content: space-between;
    padding: 20px 61px 0 40px;
    color: #616161;
    font-size: 24px;
    line-height: 32px;
}

.comments-head a {
    color: #1a6fd4;
    text-decoration: none;
}

.comment {
    display: flex;
    gap: 25px;
    padding: 44px 44px 0;
    color: #616161;
    font-size: 24px;
    line-height: 28px;
}

.comment-avatar {
    width: 48px;
    height: 48px;
    border-radius: 50%;
    background: #cfdffc;
}

.scroll-down {
    position: absolute;
    right: 31px;
    bottom: 40px;
    display: flex;
    align-items: center;
    justify-content: center;
    width: 86px;
    height: 86px;
    border-radius: 50%;
    background: #fbfbfb;
    box-shadow: 0 1px 4px rgba(0, 0, 0, 0.2);
}

/* Composer */
.composer {
    position: relative;
    display: flex;
    gap: 14px;
    padding: 8px 14px 13px;
    align-items: center;
}

.message-box {
    flex: 1;
    min-width: 0;
    display: flex;
    align-items: center;
    height: 121px;
    padding: 0 33px;
    border-radius: 61px;
    background: white;
    box-shadow: 0 2px 3px rgba(0, 0, 0, 0.15);
}

.message-box input {
    flex: 1;
    min-width: 0;
    margin-left: 36px;
    padding: 0;
    border: none;
    outline: none;
    background: none;
    font: inherit;
    font-size: 49px;
}

.message-box input::placeholder {
    color: #5b656b;
    opacity: 1;
}

.message-box .icon-button:last-child {
    margin-left: 82px;
}

.mic-button {
    display: flex;
    align-items: center;
    justify-content: center;
    width: 126px;
    height: 126px;
    border-radius: 50%;
    background: #1dab61;
    box-shadow: 0 3px 5px rgba(0, 0, 0, 0.25);
}

/* System navigation */
.system-nav {
    display: flex;
    justify-content: center;
    gap: 174px;
    height: 124px;
    padding: 0 8px 8px 0;
    background: #f9f9fb;
}
```
